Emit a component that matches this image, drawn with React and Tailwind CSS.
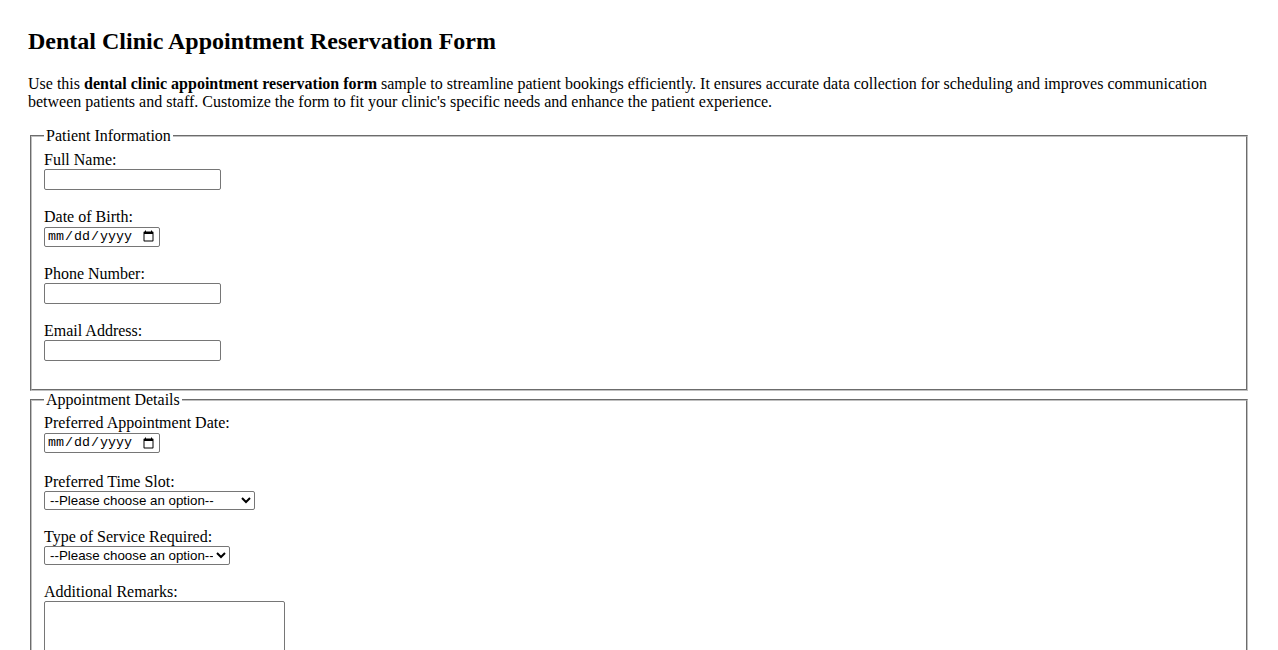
import React from "react";

const serif = { fontFamily: '"Liberation Serif", "Times New Roman", serif' };

function Label({ children, htmlFor }) {
  return (
    <label htmlFor={htmlFor} className="block text-[16px] leading-[18px] text-black">
      {children}
    </label>
  );
}

function TextField({ id, label, type = "text" }) {
  return (
    <div className="mb-[18px]">
      <Label htmlFor={id}>{label}</Label>
      <div className="h-[21px]">
        <input
          id={id}
          type={type}
          className="block w-[177px] h-[21px] border border-[#767676] rounded-[2px] bg-white px-[2px] py-[1px] text-[13.33px] font-['Liberation_Sans',Arial,sans-serif]"
        />
      </div>
    </div>
  );
}

function DateField({ id, label, spaced = false }) {
  return (
    <div className={spaced ? "mb-[20px]" : "mb-[18px]"}>
      <Label htmlFor={id}>{label}</Label>
      <div className="h-[21px] pt-[1px]">
        <input
          id={id}
          type="date"
          className="block w-[116px] h-[20px] border border-[#767676] rounded-[2px] bg-white px-[2px] py-[1px] text-[13.33px] font-['Liberation_Mono',monospace]"
        />
      </div>
    </div>
  );
}

function SelectField({ id, label, width, options }) {
  return (
    <div className="mb-[18px]">
      <Label htmlFor={id}>{label}</Label>
      <div className="h-[19px]">
        <select
          id={id}
          defaultValue=""
          className={`block ${width} h-[19px] border border-[#767676] rounded-[2px] bg-white pl-[1px] text-[13.33px] leading-[15px] text-black font-['Liberation_Sans',Arial,sans-serif]`}
        >
          <option value="">--Please choose an option--</option>
          {options.map((o) => (
            <option key={o} value={o}>
              {o}
            </option>
          ))}
        </select>
      </div>
    </div>
  );
}

export default function App() {
  return (
    <div className="min-h-screen bg-white text-black px-[28px] pt-[28px] pb-[28px]" style={serif}>
      <h2 className="text-[24px] leading-[27px] font-bold mb-[20px]">
        Dental Clinic Appointment Reservation Form
      </h2>
      <p className="text-[16px] leading-[18px] mb-[16px]">
        Use this <strong className="font-bold">dental clinic appointment reservation form</strong> sample to
        streamline patient bookings efficiently. It ensures accurate data collection for scheduling and improves
        communication between patients and staff. Customize the form to fit your clinic's specific needs and
        enhance the patient experience.
      </p>
      <form>
        <fieldset className="mx-[2px] border-2 [border-style:groove] border-[#c0c0c0] px-[12px] pt-[5.6px] pb-[10px]">
          <legend className="px-[2px] text-[16px] leading-[18px]">Patient Information</legend>
          <TextField id="fullName" label="Full Name:" />
          <DateField id="dob" label="Date of Birth:" />
          <TextField id="phone" label="Phone Number:" type="tel" />
          <TextField id="email" label="Email Address:" type="email" />
        </fieldset>
        <fieldset className="mx-[2px] border-2 [border-style:groove] border-[#c0c0c0] px-[12px] pt-[5.6px] pb-[10px]">
          <legend className="px-[2px] text-[16px] leading-[18px]">Appointment Details</legend>
          <DateField id="apptDate" label="Preferred Appointment Date:" spaced />
          <SelectField
            id="timeSlot"
            label="Preferred Time Slot:"
            width="w-[211px]"
            options={["Morning (9:00 AM - 12:00 PM)", "Afternoon (12:00 PM - 3:00 PM)", "Evening (3:00 PM - 6:00 PM)"]}
          />
          <SelectField
            id="service"
            label="Type of Service Required:"
            width="w-[186px]"
            options={["Check-up", "Cleaning", "Filling", "Extraction", "Whitening"]}
          />
          <div className="mb-[18px]">
            <Label htmlFor="remarks">Additional Remarks:</Label>
            <textarea
              id="remarks"
              className="block w-[241px] h-[82px] border border-[#767676] rounded-[2px] bg-white px-[2px] py-[2px] text-[13.33px] font-['Liberation_Mono',monospace]"
            />
          </div>
        </fieldset>
      </form>
    </div>
  );
}
